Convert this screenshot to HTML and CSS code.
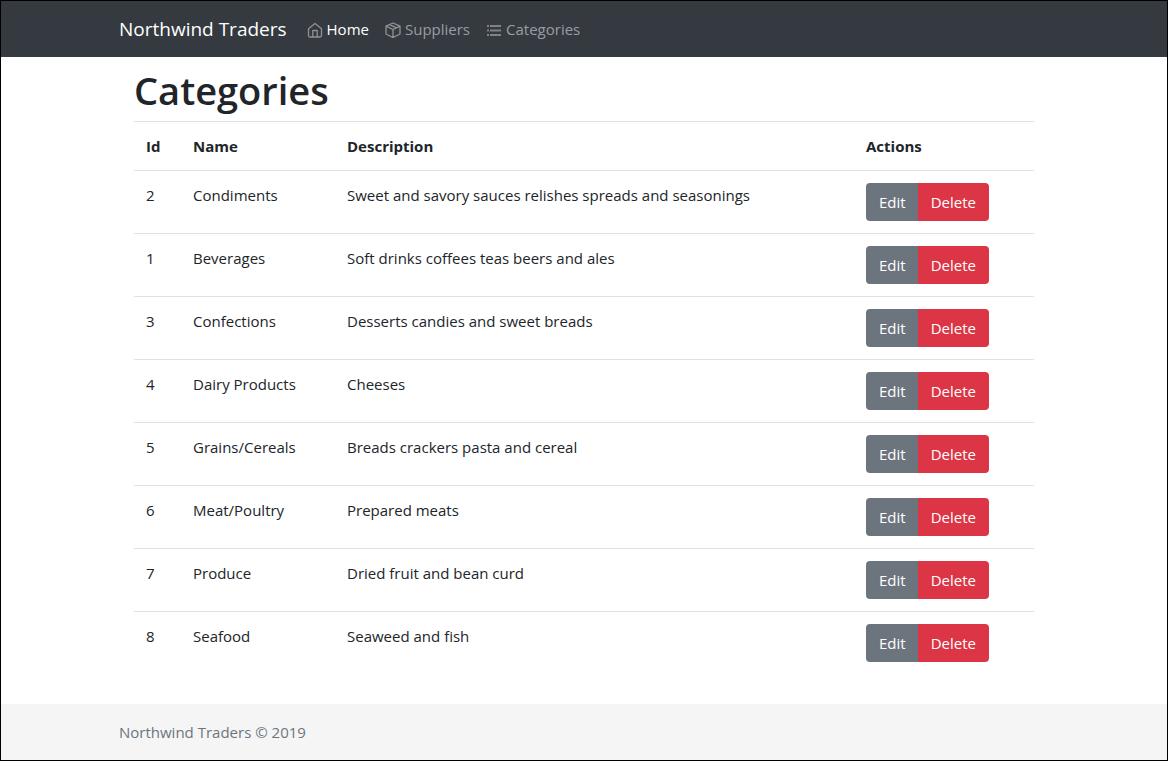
FILE: index.html
```html
<!DOCTYPE html>
<html lang="en">
<head>
<meta charset="utf-8">
<meta name="viewport" content="width=device-width, initial-scale=1">
<title>Categories - Northwind Traders</title>
<link rel="stylesheet" href="styles.css">
</head>
<body>
<header class="navbar">
  <nav class="container nav">
    <a class="brand" href="#">Northwind Traders</a>
    <a class="nav-link active" href="#">
      <svg class="icon" viewBox="0 0 16 16" aria-hidden="true"><path d="M1.500 6.800 8 1.500l6.500 5.300V13.500a1.500 1.500 0 0 1-1.500 1.500H3a1.500 1.500 0 0 1-1.500-1.500zM5.800 15V8.500h4.400V15"/></svg>
      <span>Home</span>
    </a>
    <a class="nav-link" href="#">
      <svg class="icon" viewBox="0 0 16 16" aria-hidden="true"><path d="M8 1 15 4.200v7.800L8 15.500 1 12V4.200zM1 4.200l7 3.300 7-3.300M8 7.500v8M4.500 2.600l7 3.300"/></svg>
      <span>Suppliers</span>
    </a>
    <a class="nav-link" href="#">
      <svg class="icon list" viewBox="0 0 16 16" aria-hidden="true"><path d="M1 4h2M4 4h11M1 8.500h2M4 8.500h11M1 13h2M4 13h11"/></svg>
      <span>Categories</span>
    </a>
  </nav>
</header>
<main class="container main">
  <h1 class="title">Categories</h1>
  <table class="table">
    <colgroup><col class="col-id"><col class="col-name"><col><col class="col-actions"></colgroup>
    <thead><tr><th scope="col">Id</th><th scope="col">Name</th><th scope="col">Description</th><th scope="col">Actions</th></tr></thead>
    <tbody>
      <tr><td>2</td><td>Condiments</td><td>Sweet and savory sauces relishes spreads and seasonings</td><td><div class="btn-group"><button class="btn edit" type="button">Edit</button><button class="btn delete" type="button">Delete</button></div></td></tr>
      <tr><td>1</td><td>Beverages</td><td>Soft drinks coffees teas beers and ales</td><td><div class="btn-group"><button class="btn edit" type="button">Edit</button><button class="btn delete" type="button">Delete</button></div></td></tr>
      <tr><td>3</td><td>Confections</td><td>Desserts candies and sweet breads</td><td><div class="btn-group"><button class="btn edit" type="button">Edit</button><button class="btn delete" type="button">Delete</button></div></td></tr>
      <tr><td>4</td><td>Dairy Products</td><td>Cheeses</td><td><div class="btn-group"><button class="btn edit" type="button">Edit</button><button class="btn delete" type="button">Delete</button></div></td></tr>
      <tr><td>5</td><td>Grains/Cereals</td><td>Breads crackers pasta and cereal</td><td><div class="btn-group"><button class="btn edit" type="button">Edit</button><button class="btn delete" type="button">Delete</button></div></td></tr>
      <tr><td>6</td><td>Meat/Poultry</td><td>Prepared meats</td><td><div class="btn-group"><button class="btn edit" type="button">Edit</button><button class="btn delete" type="button">Delete</button></div></td></tr>
      <tr><td>7</td><td>Produce</td><td>Dried fruit and bean curd</td><td><div class="btn-group"><button class="btn edit" type="button">Edit</button><button class="btn delete" type="button">Delete</button></div></td></tr>
      <tr><td>8</td><td>Seafood</td><td>Seaweed and fish</td><td><div class="btn-group"><button class="btn edit" type="button">Edit</button><button class="btn delete" type="button">Delete</button></div></td></tr>
    </tbody>
  </table>
</main>
<footer class="footer"><div class="container">Northwind Traders © 2019</div></footer>
</body>
</html>
```
FILE: styles.css
```css
*, *::before, *::after { box-sizing: border-box; }

body {
  display: flex;
  flex-direction: column;
  min-height: 100vh;
  margin: 0;
  border: 1px solid #000;
  background: #fff;
  color: #212529;
  font: 400 15px/24px "Segoe UI", "Open Sans", "Noto Sans", sans-serif;
}

.container {
  width: 100%;
  max-width: 960px;
  margin: 0 auto;
  padding: 0 15px;
}

.navbar { background: #343a40; padding: 8px 0; }
.nav { display: flex; flex-wrap: wrap; align-items: center; }

.brand {
  margin-right: 12px;
  color: #fff;
  font-size: 19px;
  line-height: 32px;
  text-decoration: none;
}

.nav-link {
  display: flex;
  align-items: center;
  gap: 4px;
  padding: 8px;
  color: #9a9da0;
  text-decoration: none;
}
.nav-link.active { color: #fff; }

.icon {
  width: 16px;
  height: 16px;
  margin-top: 2px;
  fill: none;
  stroke: #929292;
  stroke-width: 1.3;
  stroke-linejoin: round;
}
.icon.list { stroke: #808284; stroke-width: 1.8; }

.main { flex: 1; padding: 8px 30px 16px; }

.title {
  margin: 0 0 6px;
  font-size: 38px;
  font-weight: 600;
  line-height: 50px;
}

.table { width: 100%; border-collapse: separate; border-spacing: 0; table-layout: fixed; }
.col-id { width: 47px; }
.col-name { width: 154px; }
.col-actions { width: 180px; }

.table th, .table td {
  padding: 12px;
  border-top: 1px solid #dee2e6;
  text-align: left;
  vertical-align: top;
}
.table th { border-bottom: 0; font-weight: 700; }

.btn-group { display: inline-flex; vertical-align: top; }
.btn {
  padding: 7px 12px 7px 13px;
  border: 0;
  color: #fff;
  font: inherit;
  cursor: pointer;
}
.edit { background: #6c757d; border-radius: 4px 0 0 4px; }
.delete { padding-right: 13px; background: #dc3545; border-radius: 0 4px 4px 0; }

.footer { padding: 16px 0; background: #f5f5f5; color: #6c757d; }
```
